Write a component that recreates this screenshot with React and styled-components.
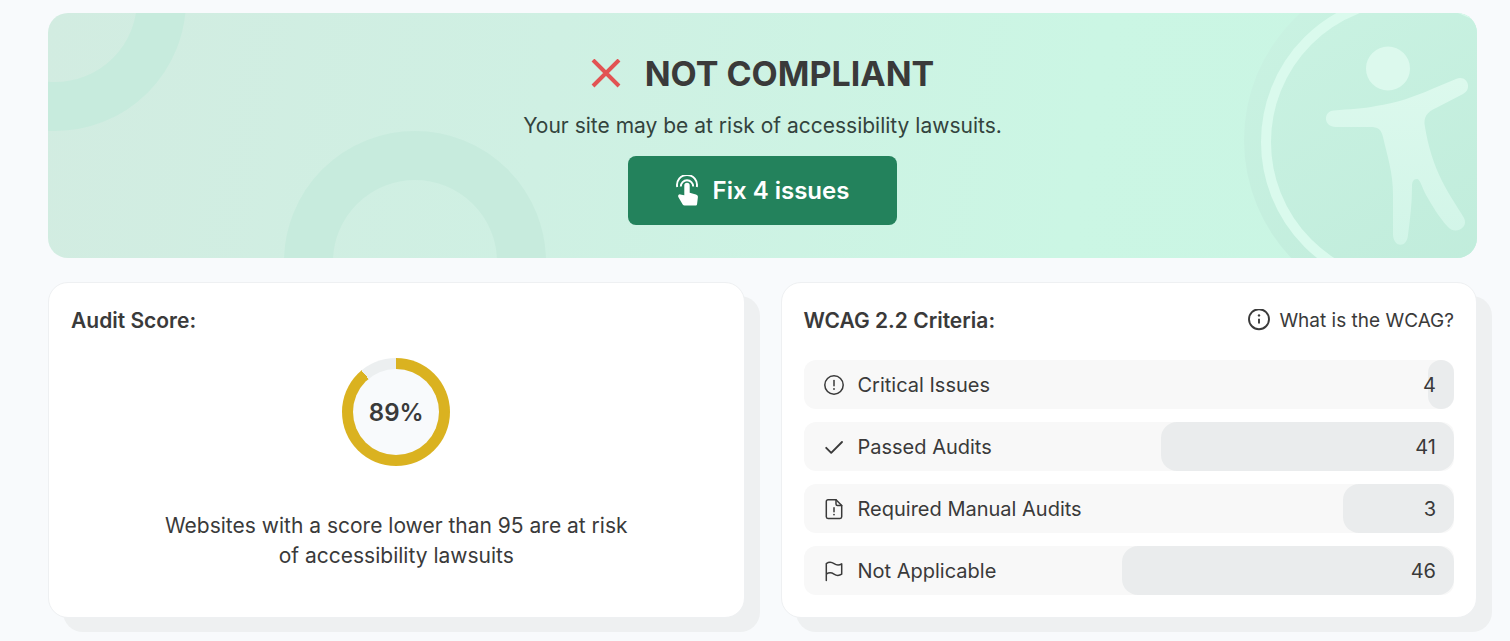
import React from "react";
import styled, { createGlobalStyle } from "styled-components";

const GlobalStyle = createGlobalStyle`
  *, *::before, *::after { box-sizing: border-box; }
  body {
    margin: 0;
    background: #f8fafc;
    color: #3a3a3a;
    font-family: Inter, "Liberation Sans", sans-serif;
  }
  h1, h2, p, ul { margin: 0; padding: 0; }
`;

const Page = styled.main`
  display: flex;
  flex-direction: column;
  gap: 24px;
  padding: 13px 33px 23px 48px;
`;

const Banner = styled.section`
  position: relative;
  overflow: hidden;
  display: flex;
  flex-direction: column;
  align-items: center;
  padding: 39px 24px 33px;
  border-radius: 20px;
  background: linear-gradient(100deg, #d2ece1 0%, #cff0e3 35%, #cbf6e4 72%, #c9f5e3 100%);
`;

const Rings = styled.svg`
  position: absolute;
  top: 0;
  left: 0;
`;

const Figure = styled.svg`
  position: absolute;
  top: 0;
  right: 0;
`;

const BannerTitle = styled.div`
  position: relative;
  display: flex;
  align-items: center;
  gap: 24px;
  height: 44px;
`;

const Headline = styled.h1`
  font-size: 34px;
  line-height: 44px;
  font-weight: 700;
`;

const BannerText = styled.p`
  position: relative;
  margin-top: 15px;
  font-size: 21px;
  line-height: 30px;
  color: #33433d;
`;

const FixButton = styled.button`
  position: relative;
  display: flex;
  align-items: center;
  justify-content: center;
  gap: 15px;
  margin-top: 15px;
  height: 69px;
  padding: 0 48px;
  border: 0;
  border-radius: 8px;
  background: #23825c;
  color: #fff;
  font: inherit;
  font-size: 24px;
  font-weight: 600;
  cursor: pointer;
`;

const Columns = styled.div`
  display: grid;
  grid-template-columns: 1fr 1fr;
  gap: 36px;
`;

const Card = styled.section`
  display: flex;
  flex-direction: column;
  padding: 23px 22px 22px;
  border: 1px solid #eef0f2;
  border-radius: 20px;
  background: #fff;
  box-shadow: 15px 14px 0 #eef0f1;
`;

const CardHead = styled.div`
  display: flex;
  justify-content: space-between;
  align-items: center;
  height: 30px;
`;

const CardTitle = styled.h2`
  font-size: 21px;
  line-height: 30px;
  font-weight: 600;
`;

const HelpLink = styled.a`
  display: flex;
  align-items: center;
  gap: 8px;
  color: inherit;
  font-size: 19px;
  line-height: 30px;
  text-decoration: none;
`;

const ScoreBody = styled.div`
  display: flex;
  flex-direction: column;
  align-items: center;
  gap: 45px;
  padding-top: 22px;
`;

const Dial = styled.div`
  display: grid;
  place-items: center;
  width: 108px;
  height: 108px;
  border-radius: 50%;
  background: conic-gradient(#dab220 ${(p) => p.$value}%, #eceff0 0);
`;

const DialValue = styled.div`
  display: grid;
  place-items: center;
  width: 86px;
  height: 86px;
  border-radius: 50%;
  background: #f8fafc;
  font-size: 24px;
  font-weight: 600;
`;

const ScoreText = styled.p`
  max-width: 480px;
  font-size: 21px;
  line-height: 30px;
  text-align: center;
`;

const List = styled.ul`
  display: grid;
  gap: 13px;
  margin-top: 24px;
  list-style: none;
`;

const Row = styled.li`
  position: relative;
  display: flex;
  align-items: center;
  gap: 12px;
  height: 49px;
  padding: 0 18px;
  border-radius: 12px;
  background: #f8f8f8;
  font-size: 20px;
`;

const Bar = styled.span`
  position: absolute;
  inset: 0 0 0 auto;
  border-radius: 16px;
  background: #eaeced;
`;

const Label = styled.span`
  position: relative;
  flex: 1;
`;

const Count = styled.span`
  position: relative;
`;

const LineIcon = ({ children, weight = 1.5 }) => (
  <svg
    width="24"
    height="24"
    viewBox="0 0 24 24"
    fill="none"
    stroke="currentColor"
    strokeWidth={weight}
    strokeLinecap="round"
    strokeLinejoin="round"
    aria-hidden="true"
  >
    {children}
  </svg>
);

const icons = {
  critical: (
    <>
      <circle cx="12" cy="12" r="9.2" />
      <path d="M12 7.6v5.2" />
      <circle cx="12" cy="16" r="0.9" fill="currentColor" stroke="none" />
    </>
  ),
  passed: <path d="M4.2 12.8l5 5L20 7" strokeWidth="1.9" />,
  manual: (
    <>
      <path d="M14 2.8H6a1.7 1.7 0 0 0-1.7 1.7v15.2A1.7 1.7 0 0 0 6 21.400h12a1.700 1.700 0 0 0 1.700-1.700V8.500z" />
      <path d="M14 2.800v4.200a1.500 1.500 0 0 0 1.500 1.500h4.200" />
      <path d="M12 10.800v4" />
      <circle cx="12" cy="17.600" r="0.900" fill="currentColor" stroke="none" />
    </>
  ),
  flag: (
    <path d="M4.300 21.500V4.600c2.600-1.800 5.200-1.700 7.800.1s5 1.800 7.600.2v10.300c-2.600 1.700-5.100 1.700-7.700-.1s-5.100-1.800-7.700 0" />
  ),
};

const criteria = [
  { icon: "critical", label: "Critical Issues", count: 4, share: 4 },
  { icon: "passed", label: "Passed Audits", count: 41, share: 45 },
  { icon: "manual", label: "Required Manual Audits", count: 3, share: 17 },
  { icon: "flag", label: "Not Applicable", count: 46, share: 51 },
];

export default function App() {
  return (
    <>
      <GlobalStyle />
      <Page>
        <Banner>
          <Rings width="520" height="245" viewBox="0 0 520 245" fill="none" aria-hidden="true">
            <g stroke="#c7ebdd" strokeWidth="49">
              <circle cx="7" cy="-13" r="106.5" />
              <circle cx="367" cy="249" r="106.5" />
            </g>
          </Rings>
          <Figure width="240" height="245" viewBox="1237 13 240 245" aria-hidden="true">
            <defs>
              <linearGradient id="disc" x1="0" y1="0" x2="0.6" y2="1">
                <stop offset="0" stopColor="#cbf3e3" />
                <stop offset="1" stopColor="#c0ecdb" />
              </linearGradient>
              <linearGradient id="body" x1="0" y1="0" x2="0" y2="1">
                <stop offset="0" stopColor="#dcf9ed" />
                <stop offset="1" stopColor="#d2f5e8" />
              </linearGradient>
            </defs>
            <circle cx="1415" cy="140" r="171" fill="url(#disc)" />
            <circle cx="1409" cy="142" r="143" fill="none" stroke="#dafaed" strokeWidth="10" />
            <circle cx="1388" cy="68.5" r="22" fill="#dcf9ed" />
            <path
              fill="url(#body)"
              d="M1334 110.5C1350 109 1363 109 1376 106C1396 103 1414 97 1432 89L1456 79C1467 74 1473 89 1463 94L1436 108C1427 112 1423 117 1425 127C1428 146 1434 165 1442 181C1449 195 1457 206 1464 218C1469 228 1455 235 1448 227C1438 216 1432 205 1426 195C1422 187 1420 179 1417 179C1413 179 1412 182 1412 187C1412 204 1410 219 1408 235C1407 248 1394 248 1393 235V195C1393 172 1387 155 1383 137C1381 129 1378 127 1370 127H1336C1323 127 1323 111 1334 110.5Z"
            />
          </Figure>
          <BannerTitle>
            <svg width="30" height="30" viewBox="0 0 30 30" stroke="#e25353" strokeWidth="4" aria-hidden="true">
              <path d="M2 1l26 26M28 1L2 27" />
            </svg>
            <Headline>NOT COMPLIANT</Headline>
          </BannerTitle>
          <BannerText>Your site may be at risk of accessibility lawsuits.</BannerText>
          <FixButton type="button">
            <svg width="22" height="31" viewBox="0 0 22 31" aria-hidden="true">
              <g fill="none" stroke="#fff" strokeWidth="1.9">
                <path d="M1.2 12A10 10 0 1 1 20.8 12" />
                <path d="M4.800 11.500A6.200 6.200 0 1 1 17.200 11.500" />
              </g>
              <path
                fill="#fff"
                d="M8.300 10.500a2.700 2.700 0 0 1 5.400 0v7.300l6.200 1.700c1.500.4 2.100 1.300 2 2.700l-.8 6.800c-.1 1-.8 1.500-1.700 1.500H8.600c-.8 0-1.400-.3-1.900-1L2.300 22c-.6-1.500.5-2.900 2-2.600l4 .9z"
              />
            </svg>
            Fix 4 issues
          </FixButton>
        </Banner>

        <Columns>
          <Card>
            <CardHead>
              <CardTitle>Audit Score:</CardTitle>
            </CardHead>
            <ScoreBody>
              <Dial $value={89}>
                <DialValue>89%</DialValue>
              </Dial>
              <ScoreText>Websites with a score lower than 95 are at risk of accessibility lawsuits</ScoreText>
            </ScoreBody>
          </Card>

          <Card>
            <CardHead>
              <CardTitle>WCAG 2.2 Criteria:</CardTitle>
              <HelpLink href="#wcag">
                <LineIcon weight={1.9}>
                  <circle cx="12" cy="10.2" r="10" />
                  <path d="M12 9.8v4.700" strokeLinecap="butt" />
                  <circle cx="12" cy="6.400" r="1.200" fill="currentColor" stroke="none" />
                </LineIcon>
                What is the WCAG?
              </HelpLink>
            </CardHead>
            <List>
              {criteria.map((item) => (
                <Row key={item.label}>
                  <Bar style={{ width: `${item.share}%` }} />
                  <LineIcon>{icons[item.icon]}</LineIcon>
                  <Label>{item.label}</Label>
                  <Count>{item.count}</Count>
                </Row>
              ))}
            </List>
          </Card>
        </Columns>
      </Page>
    </>
  );
}
